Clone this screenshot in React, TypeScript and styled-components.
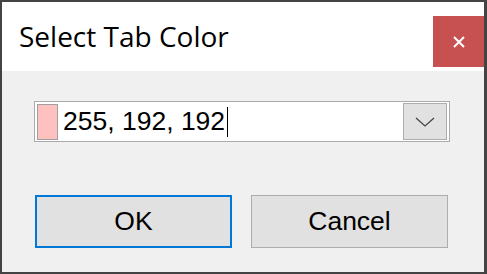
import React from "react";
import styled, { createGlobalStyle } from "styled-components";

const Global = createGlobalStyle`
  html, body { margin: 0; padding: 0; background: #f0f0f0; }
  * { box-sizing: border-box; }
`;

const Frame = styled.div`
  width: 487px;
  height: 274px;
  border-style: solid;
  border-color: #434343;
  border-width: 2px 3px 2px 2px;
  display: flex;
  flex-direction: column;
  background: #f0f0f0;
  font-family: "Liberation Sans", Arial, sans-serif;
`;

const TitleBar = styled.div`
  height: 69px;
  background: #ffffff;
  display: flex;
  align-items: flex-start;
  justify-content: space-between;
`;

const Title = styled.div`
  font-family: "Open Sans", sans-serif;
  font-size: 28px;
  color: #000;
  padding: 14px 0 0 17px;
  line-height: 40px;
`;

const CloseButton = styled.div`
  width: 51px;
  height: 51px;
  margin-top: 14px;
  background: #c75050;
  display: flex;
  align-items: center;
  justify-content: center;
`;

const Body = styled.div`
  flex: 1;
  display: flex;
  flex-direction: column;
  padding: 30px 32px 0 32px;
`;

const Combo = styled.div`
  width: 416px;
  height: 41px;
  background: #fff;
  border: 1px solid #ababab;
  display: flex;
  align-items: center;
  padding: 1px 1px 1px 2px;
`;

const Swatch = styled.div<{ $color: string }>`
  width: 21px;
  height: 36px;
  background: ${(p) => p.$color};
  border: 1px solid #a0a0a0;
  flex: none;
`;

const Value = styled.div`
  font-size: 26.5px;
  color: #000;
  margin-left: 5px;
  display: flex;
  align-items: center;
  flex: 1;
`;

const Caret = styled.span`
  display: inline-block;
  width: 1px;
  height: 30px;
  background: #000;
  margin-left: 2px;
`;

const DropButton = styled.div`
  width: 44px;
  height: 37px;
  background: #e1e1e1;
  border: 1px solid #adadad;
  display: flex;
  align-items: center;
  justify-content: center;
  margin-right: 1px;
`;

const ButtonRow = styled.div`
  display: flex;
  gap: 19px;
  margin-top: 53px;
  padding-left: 1px;
`;

const Button = styled.div<{ $focused?: boolean }>`
  width: 197px;
  height: 53px;
  background: #e1e1e1;
  border: ${(p) => (p.$focused ? "2px solid #0078d7" : "1px solid #adadad")};
  display: flex;
  align-items: center;
  justify-content: center;
  font-size: 26.5px;
  color: #000;
`;

export default function App() {
  return (
    <>
      <Global />
      <Frame>
        <TitleBar>
          <Title>Select Tab Color</Title>
          <CloseButton>
            <svg width="12" height="12" viewBox="0 0 12 12">
              <path d="M1 1 L11 11 M11 1 L1 11" stroke="#fff" strokeWidth="2" />
            </svg>
          </CloseButton>
        </TitleBar>
        <Body>
          <Combo>
            <Swatch $color="#ffc0c0" />
            <Value>
              255, 192, 192
              <Caret />
            </Value>
            <DropButton>
              <svg width="20" height="12" viewBox="0 0 20 12">
                <path d="M1 2 L10 10 L19 2" stroke="#444" strokeWidth="1.3" fill="none" />
              </svg>
            </DropButton>
          </Combo>
          <ButtonRow>
            <Button $focused>OK</Button>
            <Button>Cancel</Button>
          </ButtonRow>
        </Body>
      </Frame>
    </>
  );
}
